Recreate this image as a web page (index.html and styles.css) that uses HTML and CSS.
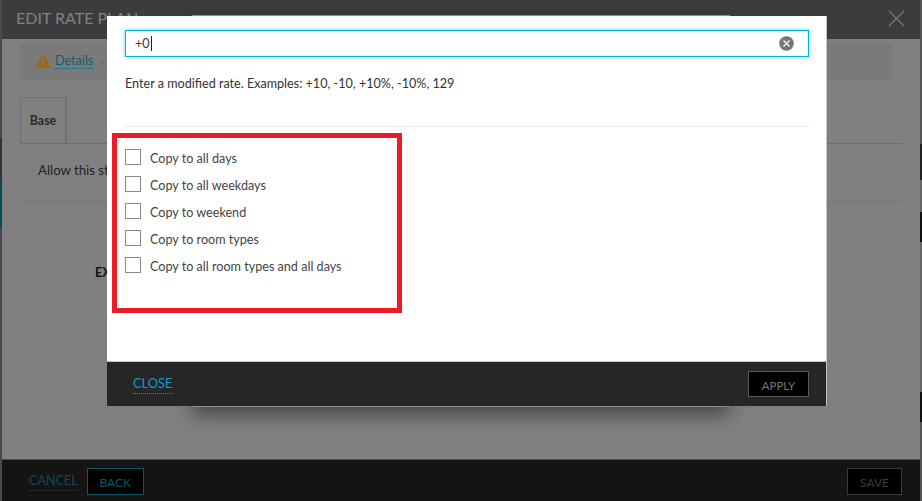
FILE: index.html
```html
<!DOCTYPE html>
<html lang="en">
<head>
<meta charset="utf-8">
<title>Edit rate plan</title>
<link rel="stylesheet" href="styles.css">
</head>
<body>
<div class="screen">
  <div class="dialog">
    <header class="dialog-head">
      <h1 class="dialog-title">EDIT RATE PLAN</h1>
      <svg class="dialog-x" width="17" height="17" viewBox="0 0 17 17"><path d="M1 1L16 16M16 1L1 16" stroke="#7b7b7b" stroke-width="1.1" fill="none"/></svg>
    </header>
    <main class="dialog-body">
      <nav class="crumbs">
        <svg class="warn" width="16" height="15" viewBox="0 0 16 15"><path d="M8 0L16 15H0Z" fill="#a0691a"/><rect x="7.1" y="4.6" width="1.8" height="5.6" fill="#7a7a7a"/><rect x="7.1" y="11" width="1.8" height="1.8" fill="#7a7a7a"/></svg>
        <a class="crumb-link">Details</a>
        <span class="crumb-sep">&gt;</span>
      </nav>
      <div class="tabs"><div class="tab">Base</div></div>
      <div class="row-allow">Allow this stay</div>
      <div class="row-ex">EXTRA</div>
    </main>
    <footer class="dialog-foot">
      <a class="cancel">CANCEL</a>
      <div class="btn btn-back">BACK</div>
      <div class="btn btn-save">SAVE</div>
    </footer>
  </div>

  <div class="modal-back"></div>
  <section class="modal">
    <div class="modal-body">
      <div class="field">
        <span class="field-value">+0</span><span class="caret"></span>
        <svg class="clear" width="15" height="15" viewBox="0 0 15 15"><circle cx="7.5" cy="7.5" r="7.3" fill="#777"/><path d="M4.5 4.5L10.5 10.5M10.5 4.5L4.5 10.5" stroke="#fff" stroke-width="1.1"/></svg>
      </div>
      <p class="hint">Enter a modified rate. Examples: +10, -10, +10%, -10%, 129</p>
      <hr class="sep">
      <ul class="copy-list">
        <li class="copy-item"><span class="check"></span>Copy to all days</li>
        <li class="copy-item"><span class="check"></span>Copy to all weekdays</li>
        <li class="copy-item"><span class="check"></span>Copy to weekend</li>
        <li class="copy-item"><span class="check"></span>Copy to room types</li>
        <li class="copy-item"><span class="check"></span>Copy to all room types and all days</li>
      </ul>
    </div>
    <footer class="modal-foot">
      <a class="close">CLOSE</a>
      <div class="btn btn-apply">APPLY</div>
    </footer>
  </section>
  <div class="annotation"></div>
</div>
</body>
</html>
```
FILE: styles.css
```css
* { box-sizing: border-box; }
html, body { margin: 0; padding: 0; }
body { font-family: Lato, "Liberation Sans", sans-serif; font-size: 12px; background: #555; overflow: hidden; }

.screen {
  position: relative;
  width: 922px;
  height: 501px;
  overflow: hidden;
  padding: 0 2px;
  background:
    linear-gradient(to bottom, #4a4a4a 0, #4a4a4a 138px, #333 138px, #333 180px, #0d4b5b 180px, #0d4b5b 228px, #4a4a4a 228px) left top / 2px 100% no-repeat,
    linear-gradient(to bottom, #555 0, #555 144px, #222 144px, #222 180px, #666 180px, #666 212px, #111 212px, #111 242px, #666 242px, #666 392px, #111 392px, #111 422px, #555 422px) right top / 2px 100% no-repeat,
    #555;
}

.dialog { height: 501px; display: flex; flex-direction: column; }

.dialog-head {
  height: 39px;
  flex: none;
  background: #3c3c3c;
  display: flex;
  align-items: flex-start;
  justify-content: space-between;
  padding: 9px 15px 0 14px;
}
.dialog-title { margin: 0; font-size: 16px; line-height: 17px; font-weight: 400; color: #818181; letter-spacing: 0; }
.dialog-x { display: block; margin-top: 1px; }

.dialog-body {
  flex: 1;
  background: #808080;
  padding: 4px 18px 0;
  color: #262626;
}
.crumbs {
  height: 37px;
  width: 872px;
  margin-bottom: 17px;
  background: #7a7a7a;
  border-radius: 4px;
  display: flex;
  align-items: center;
  padding-left: 15px;
}
.warn { display: block; margin-right: 4px; margin-top: -3px; }
.crumb-link { font-size: 12.6px; color: #0a5f70; border-bottom: 1px dotted #0a5f70; line-height: 15px; margin-top: -1px; }
.crumb-sep { color: #6a6a6a; margin-left: 5px; font-size: 12px; }

.tabs { border-bottom: 1px solid #6e6e6e; width: 882px; height: 47px; }
.tab {
  width: 47px;
  height: 46px;
  border: 1px solid #707070;
  border-bottom: 0;
  border-right-width: 2px;
  border-radius: 2px 2px 0 0;
  display: flex;
  align-items: center;
  justify-content: center;
  font-weight: 700;
  font-size: 12.4px;
  color: #2a2a2a;
}
.row-allow {
  width: 882px;
  height: 58px;
  border-bottom: 1px solid #747474;
  padding: 18px 0 0 18px;
  font-size: 13.2px;
  line-height: 16px;
  color: #1f1f1f;
}
.row-ex { padding: 63px 0 0 75px; font-weight: 700; font-size: 12.6px; line-height: 15px; color: #111; }

.dialog-foot {
  height: 42px;
  flex: none;
  background: #141414;
  border-top: 1px solid #4d4d4d;
  display: flex;
  align-items: flex-start;
  padding: 8px 18px 0 27px;
}
.btn {
  display: flex;
  align-items: center;
  justify-content: center;
  background: #000;
  font-size: 12px;
  height: 27px;
  padding-top: 2px;
}
.cancel { font-size: 12.6px; line-height: 16px; margin-top: 5px; color: #0b4b5c; border-bottom: 1px dotted #0b4b5c; padding-bottom: 1px; }
.btn-back { width: 57px; margin-left: 9px; border: 1px solid #0e5668; color: #0e5668; }
.btn-save { width: 55px; margin-left: auto; border: 1px solid #3a3a3a; color: #3c3c3c; }

.modal-back {
  position: absolute;
  left: 192px;
  top: 15px;
  width: 538px;
  height: 392px;
  background: #8c8c8c;
  box-shadow: 0 8px 18px rgba(0,0,0,.45);
}
.modal {
  position: absolute;
  left: 107px;
  top: 16px;
  width: 720px;
  height: 390px;
  display: flex;
  flex-direction: column;
  background: #fff;
  border-right: 1px solid #c4c4c4;
}
.modal-body { flex: 1; padding: 14px 18px 0; color: #333; }
.field {
  height: 27px;
  width: 684px;
  border: 1px solid #00b4da;
  box-shadow: 0 0 4px rgba(0,180,218,.6);
  display: flex;
  align-items: center;
  padding: 0 14px 0 9px;
  font-size: 12.6px;
  color: #333;
}
.caret { width: 1px; height: 15px; background: #222; margin-left: 1px; }
.clear { margin-left: auto; display: block; }
.hint { margin: 19px 0 0; font-size: 12.6px; line-height: 16px; color: #333; }
.sep { margin: 34px 0 0; border: 0; height: 1px; width: 684px; background: #e9e9e9; }
.copy-list { list-style: none; margin: 22px 0 0; padding: 0; }
.copy-item { height: 27px; display: flex; align-items: flex-start; color: #444; font-size: 12.6px; line-height: 20px; }
.check { width: 16px; height: 16px; border: 1px solid #8a8a8a; margin-right: 9px; flex: none; }

.modal-foot {
  height: 45px;
  flex: none;
  background: #262626;
  border-top: 1px solid #c8c8c8;
  display: flex;
  align-items: flex-start;
  justify-content: space-between;
  padding: 9px 17px 0 26px;
}
.close { font-size: 12.8px; line-height: 16px; margin-top: 4px; color: #0a9ec4; border-bottom: 1px dotted #0a9ec4; padding-bottom: 2px; }
.btn-apply { width: 61px; height: 26px; border: 1px solid #5a5a5a; color: #787878; font-size: 11.4px; }

.annotation {
  position: absolute;
  left: 112px;
  top: 133px;
  width: 290px;
  height: 180px;
  border: 5px solid #ed1c24;
}
```
